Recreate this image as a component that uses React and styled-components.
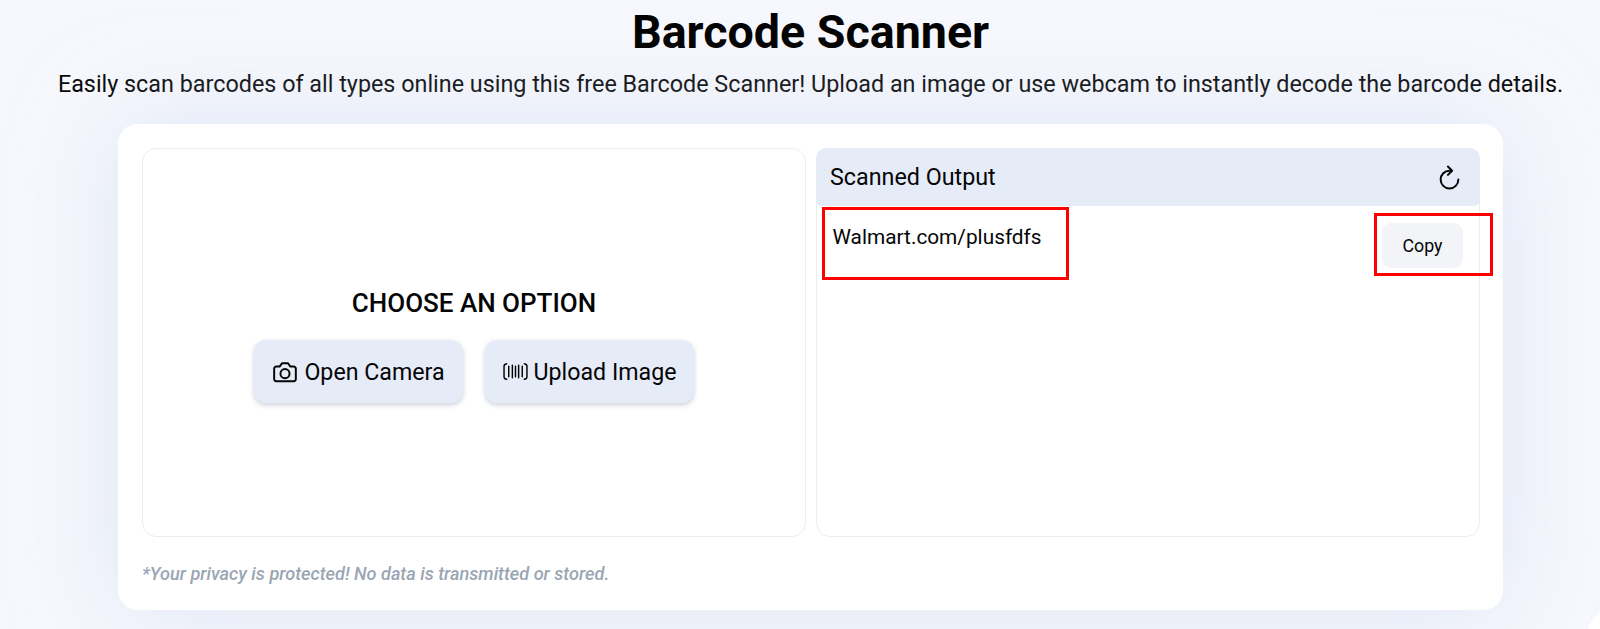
import React from "react";
import styled, { createGlobalStyle } from "styled-components";

const GlobalStyle = createGlobalStyle`
  html, body {
    margin: 0;
    height: 100%;
    overflow: hidden;
    background: #f7f8fd;
    font-family: Roboto, "Liberation Sans", sans-serif;
    color: #050505;
  }
`;

const Page = styled.div`
  box-sizing: border-box;
  position: relative;
  width: 1600px;
  height: 629px;
  padding-left: 21px;
  overflow: hidden;
  display: flex;
  flex-direction: column;
  align-items: center;
`;

const Title = styled.h1`
  margin: 4px 0 0;
  font-size: 46.6px;
  line-height: 56px;
  font-weight: 700;
  color: #000;
`;

const Subtitle = styled.p`
  margin: 9px 0 0;
  font-size: 23.35px;
  line-height: 30px;
  white-space: nowrap;
`;

const Card = styled.main`
  box-sizing: border-box;
  width: 1385px;
  height: 486px;
  margin-top: 25px;
  padding: 24px 23px 0 24px;
  background: #fff;
  border-radius: 20px;
  box-shadow: 0 0 100px rgba(200, 214, 238, 0.55);
  flex-shrink: 0;
`;

const Panels = styled.div`
  display: grid;
  grid-template-columns: 664px 664px;
  gap: 10px;
  height: 389px;
`;

const Panel = styled.section`
  box-sizing: border-box;
  position: relative;
  border: 1px solid #ebedf1;
  border-radius: 14px;
  display: flex;
  flex-direction: column;
`;

const ChooseBody = styled.div`
  flex: 1;
  display: flex;
  flex-direction: column;
  align-items: center;
  justify-content: center;
  padding-top: 6px;
`;

const ChooseTitle = styled.h2`
  margin: 0;
  font-size: 26px;
  line-height: 30px;
  font-weight: 500;
`;

const Actions = styled.div`
  display: flex;
  gap: 22px;
  margin-top: 22px;
`;

const ActionButton = styled.button`
  display: flex;
  align-items: center;
  justify-content: center;
  gap: 6px;
  width: 209px;
  height: 63px;
  padding: 0;
  border: 0;
  border-radius: 12px;
  background: #e6ebf8;
  box-shadow: 0 2px 5px rgba(90, 100, 130, 0.3);
  font: 400 23.2px Roboto, sans-serif;
  color: #050505;
`;

const OutputHeader = styled.header`
  display: flex;
  align-items: center;
  justify-content: space-between;
  height: 58px;
  margin: -1px -1px 0;
  padding: 0 18px 0 14px;
  background: #e6ebf8;
  border-radius: 10px 10px 6px 6px;
  font-size: 23.3px;
`;

const OutputRow = styled.div`
  display: flex;
  align-items: flex-start;
  justify-content: space-between;
  padding: 18px 16px 0 15.5px;
`;

const OutputText = styled.span`
  font-size: 20.8px;
  line-height: 26px;
`;

const CopyButton = styled.button`
  width: 81px;
  height: 45px;
  margin-top: -1px;
  padding: 0;
  border: 0;
  border-radius: 9px;
  background: #f3f4f8;
  font: 400 17.8px Roboto, sans-serif;
  color: #050505;
`;

const Annotation = styled.div`
  position: absolute;
  box-sizing: border-box;
  border: 3px solid #ff0000;
  top: ${({ $top }) => $top}px;
  left: ${({ $left }) => $left}px;
  width: ${({ $width }) => $width}px;
  height: ${({ $height }) => $height}px;
`;

const Privacy = styled.p`
  margin: 26px 0 0;
  font-size: 18.15px;
  line-height: 22px;
  font-weight: 500;
  font-style: italic;
  color: #9aa5b4;
`;

// corner of the floating button that is cut off by the window
const FloatingButton = styled.div`
  position: absolute;
  left: 1587px;
  top: 607px;
  width: 60px;
  height: 60px;
  border-radius: 50%;
  background: #fff;
`;

const CameraIcon = () => (
  <svg width="26" height="26" viewBox="0 0 24 24" fill="none" stroke="currentColor" strokeWidth="1.8" strokeLinejoin="round">
    <path d="M14.8 4H9.2L7 7H4a2 2 0 0 0-2 2v9.5a2 2 0 0 0 2 2h16a2 2 0 0 0 2-2V9a2 2 0 0 0-2-2h-3z" />
    <circle cx="12" cy="13.5" r="4.2" />
  </svg>
);

const BarcodeIcon = () => (
  <svg width="25" height="25" viewBox="0 0 24 24" fill="none" stroke="currentColor" strokeWidth="1.4" strokeLinecap="round">
    <path d="M3.5 4.5C1.8 4.8 1 5.5 1 7V17C1 18.5 1.8 19.2 3.5 19.5" />
    <path d="M20.5 4.5C22.2 4.8 23 5.5 23 7V17C23 18.5 22.2 19.2 20.5 19.5" />
    <path d="M5.5 7V17M9 6V18M12 7V17M15 6V18M18.5 7V17" />
  </svg>
);

const RefreshIcon = () => (
  <svg width="25" height="25" viewBox="0 0 24 24" fill="none" stroke="currentColor" strokeWidth="1.9" strokeLinecap="round" strokeLinejoin="round">
    <path d="M20.5 14A8.5 8.5 0 1 1 12 5.5H14" />
    <path d="M10.5 1.5L14.5 5.5L10.5 9.5" />
  </svg>
);

export default function App() {
  return (
    <Page>
      <GlobalStyle />
      <Title>Barcode Scanner</Title>
      <Subtitle>
        Easily scan barcodes of all types online using this free Barcode Scanner! Upload an image or use webcam to instantly decode the barcode details.
      </Subtitle>
      <Card>
        <Panels>
          <Panel>
            <ChooseBody>
              <ChooseTitle>CHOOSE AN OPTION</ChooseTitle>
              <Actions>
                <ActionButton>
                  <CameraIcon />
                  Open Camera
                </ActionButton>
                <ActionButton>
                  <BarcodeIcon />
                  Upload Image
                </ActionButton>
              </Actions>
            </ChooseBody>
          </Panel>
          <Panel>
            <OutputHeader>
              Scanned Output
              <RefreshIcon />
            </OutputHeader>
            <OutputRow>
              <OutputText>Walmart.com/plusfdfs</OutputText>
              <CopyButton>Copy</CopyButton>
            </OutputRow>
            <Annotation $top={58} $left={5} $width={247} $height={73} />
            <Annotation $top={64} $left={557} $width={119} $height={63} />
          </Panel>
        </Panels>
        <Privacy>*Your privacy is protected! No data is transmitted or stored.</Privacy>
      </Card>
      <FloatingButton />
    </Page>
  );
}
